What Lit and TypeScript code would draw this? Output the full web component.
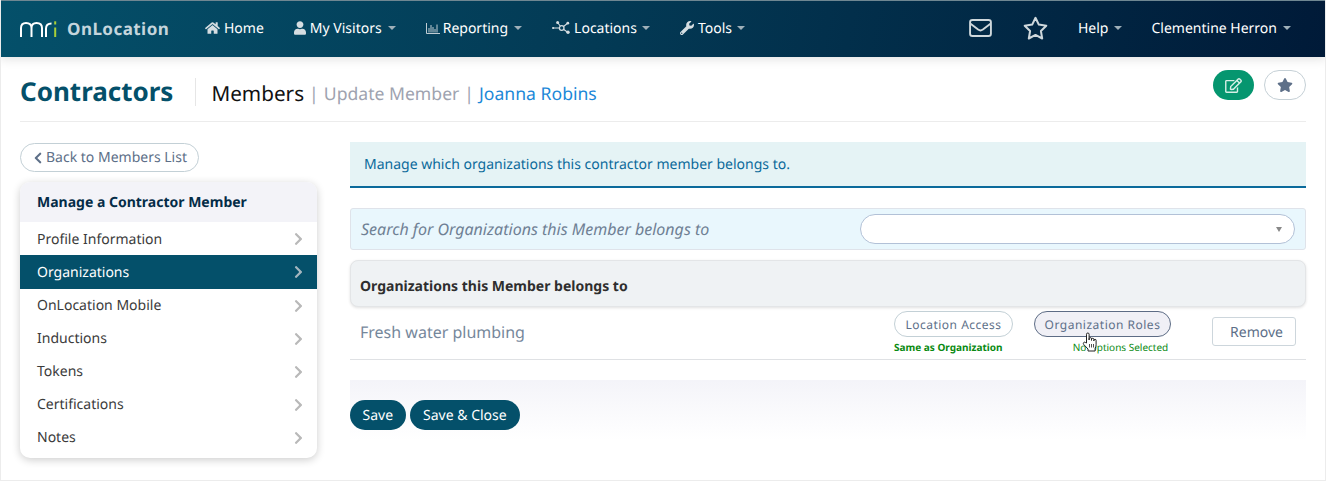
import { LitElement, html, css } from "lit";
import { customElement } from "lit/decorators.js";

const fa = (w: number, h: number, d: string, cls = "") =>
  html`<svg class="fa ${cls}" viewBox="0 0 ${w} ${h}" fill="currentColor"><path d=${d}></path></svg>`;

const CHEV = "M285.476 272.971L91.132 467.314c-9.373 9.373-24.569 9.373-33.941 0l-22.667-22.667c-9.357-9.357-9.375-24.522-.04-33.901L188.505 256 34.484 101.255c-9.335-9.379-9.317-24.544.04-33.901l22.667-22.667c9.373-9.373 24.569-9.373 33.941 0L285.475 239.03c9.373 9.372 9.373 24.568.001 33.941z";
const STAR = "M259.3 17.8L194 150.2 47.9 171.5c-26.2 3.8-36.7 36.1-17.7 54.6l105.7 103-25 145.5c-4.5 26.3 23.2 46 46.4 33.7L288 439.6l130.7 68.7c23.2 12.2 50.9-7.4 46.4-33.7l-25-145.5 105.7-103c19-18.5 8.5-50.8-17.7-54.6L382 150.2 316.7 17.8c-11.7-23.6-45.6-23.9-57.4 0z";
const HOME = "M280.37 148.26L96 300.11V464a16 16 0 0 0 16 16l112.06-.29a16 16 0 0 0 15.92-16V368a16 16 0 0 1 16-16h64a16 16 0 0 1 16 16v95.64a16 16 0 0 0 16 16.05L464 480a16 16 0 0 0 16-16V300L295.67 148.26a12.19 12.19 0 0 0-15.3 0zM571.6 251.47L488 182.56V44.05a12 12 0 0 0-12-12h-56a12 12 0 0 0-12 12v72.61L318.47 43a48 48 0 0 0-61 0L4.34 251.47a12 12 0 0 0-1.6 16.9l25.5 31A12 12 0 0 0 45.15 301l235.22-193.74a12.19 12.19 0 0 1 15.3 0L530.9 301a12 12 0 0 0 16.9-1.6l25.5-31a12 12 0 0 0-1.7-16.93z";
const USER = "M224 256c70.7 0 128-57.3 128-128S294.7 0 224 0 96 57.3 96 128s57.3 128 128 128zm89.6 32h-16.7c-22.2 10.2-46.9 16-72.9 16s-50.6-5.8-72.9-16h-16.7C60.2 288 0 348.2 0 422.4V464c0 26.5 21.5 48 48 48h352c26.5 0 48-21.5 48-48v-41.6c0-74.2-60.2-134.4-134.4-134.4z";
const WRENCH = "M507.73 109.1c-2.24-9.03-13.54-12.09-20.12-5.51l-74.36 74.36-67.88-11.31-11.31-67.88 74.36-74.36c6.62-6.62 3.43-17.9-5.66-20.16-47.38-11.74-99.55.91-136.58 37.93-39.64 39.64-50.55 97.1-34.05 147.2L18.74 402.76c-24.99 24.99-24.99 65.51 0 90.5 24.99 24.99 65.51 24.99 90.5 0l213.21-213.21c50.12 16.71 107.47 5.68 147.37-34.22 37.07-37.07 49.7-89.32 37.91-136.73zM64 472c-13.25 0-24-10.75-24-24 0-13.26 10.75-24 24-24s24 10.74 24 24c0 13.25-10.75 24-24 24z";
const EDIT = "M402.3 344.9l32-32c5-5 13.7-1.5 13.7 5.7V464c0 26.5-21.5 48-48 48H48c-26.5 0-48-21.5-48-48V112c0-26.5 21.5-48 48-48h273.5c7.1 0 10.7 8.6 5.7 13.7l-32 32c-1.5 1.5-3.5 2.3-5.7 2.3H48v352h352V350.5c0-2.1.8-4.1 2.3-5.6zm156.6-201.8L296.3 405.7l-90.4 10c-26.2 2.9-48.5-19.2-45.6-45.6l10-90.4L432.9 17.1c22.9-22.9 59.9-22.9 82.7 0l43.2 43.2c22.9 22.9 22.9 60 .1 82.8zM460.1 174L402 115.9 216.2 301.8l-7.3 65.3 65.3-7.3L460.1 174zm64.8-79.7l-43.2-43.2c-4.1-4.1-10.8-4.1-14.8 0L436 82l58.1 58.1 30.9-30.9c4-4.2 4-10.8-.1-14.9z";

const chartIcon = html`<svg class="ico chart" viewBox="0 0 14 11" fill="none" stroke="currentColor" stroke-width="0.9"><path d="M.5 0v10.5H14M3 5v4.5M5 2v7.5M7 4v5.5M9 6v3.5M11 1.5v8"></path></svg>`;
const nodesIcon = html`<svg class="ico nodes" viewBox="0 0 18 14" fill="currentColor"><path d="M5.6 1.5L9.7 7L15.6 2.2M9.7 7L16 11.5M1 7h8.7" stroke="currentColor" stroke-width="1.1" fill="none"></path><circle cx="1.1" cy="7" r="1.1"></circle><circle cx="5.6" cy="1.6" r="1.5"></circle><circle cx="15.8" cy="2.2" r="1.4"></circle><circle cx="16" cy="11.3" r="1.7"></circle><circle cx="9.7" cy="7" r="2.3" fill="#033d58" stroke="currentColor" stroke-width="1.3"></circle></svg>`;

const logo = html`<svg class="logo" viewBox="0 0 37 16" fill="none" stroke-width="2">
  <path stroke="#fff" d="M1 16V7C1 3.5 3.2 2 6 2S11.5 3.5 11.5 7V16M11.5 7C11.5 3.5 13.7 2 16.5 2S22 3.5 22 7V16"></path>
  <path stroke="#fff" d="M26 16V7.5C26 4 28 2.5 31.5 2.5"></path>
  <path stroke="#a9cf38" d="M35.2 6.5V16"></path>
  <path stroke="#a9cf38" d="M35.2 .3V3.5"></path>
</svg>`;

const hand = html`<svg class="hand" viewBox="0 0 16 20"><path fill="#fff" stroke="#222" stroke-width="1" stroke-linejoin="round" d="M4.5 11V2.3a1.3 1.3 0 0 1 2.6 0V8V6.8a1.2 1.2 0 0 1 2.4 0V8.4V7.5a1.2 1.2 0 0 1 2.4 0V9V8.4a1.1 1.1 0 0 1 2.2 0v4.4c0 1.5-.5 2.5-1 3.4V19H6v-2L1.8 12.6c-1.3-1.6.4-3.3 1.8-2z"></path><path stroke="#222" stroke-width=".8" d="M7.5 12v3.5M9.5 12v3.5M11.5 12v3.5"></path></svg>`;

const NAV = [
  { label: "Home", icon: fa(576, 512, HOME, "home") },
  { label: "My Visitors", icon: fa(448, 512, USER, "user"), caret: true },
  { label: "Reporting", icon: chartIcon, caret: true },
  { label: "Locations", icon: nodesIcon, caret: true },
  { label: "Tools", icon: fa(512, 512, WRENCH, "wrench"), caret: true },
];

const MENU = ["Profile Information", "Organizations", "OnLocation Mobile", "Inductions", "Tokens", "Certifications", "Notes"];

@customElement("app-root")
export class AppRoot extends LitElement {
  static styles = css`
    :host {
      display: block;
      width: 1326px;
      height: 481px;
      box-sizing: border-box;
      font-family: "Noto Sans", sans-serif;
      text-rendering: geometricPrecision;
      background: #fff;
      overflow: hidden;
      border-left: 1px solid #ececec;
      border-right: 1px solid #ececec;
      border-bottom: 1px solid #ececec;
    }
    * { box-sizing: border-box; }
    .fa, .ico { display: block; flex: none; }

    .top {
      height: 57px;
      margin: 0 -1px;
      border-top: 1px solid #6f8792;
      background: linear-gradient(100deg, #04506a 0%, #033a55 45%, #001a38 100%);
      box-shadow: 0 2px 10px rgba(0, 0, 0, 0.12);
      display: flex;
      align-items: center;
      padding: 0 35px 2px 20px;
      color: #fff;
      font-size: 14px;
    }
    .logo { width: 37px; height: 16px; flex: none; margin-top: 2px; }
    .brand { margin: 1px 0 0 10px; width: 138px; font-size: 17px; font-weight: 700; color: #c4d5dc; letter-spacing: 0.45px; }
    .nav { display: flex; gap: 30px; align-items: center; }
    .nav-item { display: flex; align-items: center; }
    .nav-item:nth-child(4) .caret, .nav-item:nth-child(5) .caret { margin-left: 5px; }
    .nav-item:nth-child(3) .icon-slot { margin-right: 3px; }
    .icon-slot { color: #d5dde1; margin-right: 4px; display: flex; }
    .home { width: 15px; height: 14px; }
    .user { width: 12px; height: 14px; }
    .chart { width: 14px; height: 11px; }
    .nodes { width: 18px; height: 14px; }
    .wrench { width: 14px; height: 14px; }
    .caret {
      width: 0; height: 0; margin-left: 6px;
      border-left: 4px solid transparent;
      border-right: 4px solid transparent;
      border-top: 4px solid #9fb0b9;
    }
    .spacer { flex: 1; }
    .top-icons { display: flex; align-items: center; gap: 31px; color: #cfd8dc; margin-right: 30px; }
    .env { width: 23px; height: 18px; }
    .star-o { width: 25px; height: 24px; }
    .right-nav { display: flex; gap: 29px; }

    .title-row {
      margin: 0 19px;
      height: 65px;
      padding-top: 6px;
      display: flex;
      align-items: center;
      border-bottom: 1px solid #ececec;
    }
    h1 { margin: -2px 0 0; font-size: 26px; font-weight: 700; color: #04506a; line-height: 34px; }
    .crumbs {
      margin-left: 22px;
      padding: 4px 0 0 15px;
      height: 28px;
      border-left: 1px solid #e6e6e6;
      display: flex;
      align-items: center;
      gap: 5px;
      font-size: 17.6px;
      color: #9ea3b0;
      white-space: nowrap;
    }
    .crumbs .main { font-size: 20.7px; color: #111; flex: none; }
    .crumbs .who { color: #1c88d8; }
    .actions { margin-left: auto; display: flex; gap: 10px; margin-top: -14px; }
    .round { width: 41px; height: 30px; border-radius: 15px; display: flex; align-items: center; justify-content: center; }
    .round.edit { background: #05966f; color: #d6efe6; }
    .round.edit .fa { width: 17px; height: 15px; }
    .round.fav { background: #fff; border: 1px solid #c5d0d6; color: #5d6f88; width: 42px; }
    .round.fav .fa { width: 16px; height: 14px; }

    .body { display: flex; padding: 20px 19px 0; gap: 33px; align-items: flex-start; }
    .side { width: 297px; flex: none; padding-top: 1px; }
    .back {
      width: 179px; height: 29px;
      border: 1px solid #c3d0d6;
      border-radius: 15px;
      display: flex;
      align-items: center;
      padding-left: 13px;
      gap: 4px;
      font-size: 14px;
      color: #5d6f88;
    }
    .back .fa { width: 8px; height: 14px; transform: scaleX(-1); }
    .menu {
      margin-top: 10px;
      border-radius: 10px;
      background: #fff;
      box-shadow: 0 2px 8px rgba(0, 0, 0, 0.2);
      overflow: hidden;
    }
    .menu-head {
      height: 40px;
      background: #f3f3f8;
      padding-left: 17px;
      display: flex;
      align-items: center;
      font-size: 14px;
      font-weight: 700;
      color: #042c47;
    }
    .menu-item {
      height: 33px;
      padding: 0 14px 0 17px;
      display: flex;
      align-items: center;
      justify-content: space-between;
      font-size: 14px;
      color: #3b3b3b;
    }
    .menu-item:nth-child(2) { padding-top: 1px; }
    .menu-item.active { background: #04506a; color: #fff; height: 34px; }
    .menu-item .fa { width: 9px; height: 14px; color: #b9b9b9; }
    .menu-item.active .fa { color: #a4b6bf; }
    .menu-item:last-child { height: 37px; padding-bottom: 4px; }

    .main { flex: 1; min-width: 0; }
    .alert {
      height: 46px;
      background: #e5f3f5;
      border-bottom: 2px solid #0b6a9b;
      padding: 0 14px;
      display: flex;
      align-items: center;
      font-size: 14px;
      color: #0b6a9b;
    }
    .search {
      margin-top: 20px;
      height: 42px;
      background: #e9f7fd;
      border: 1px solid #dfe3ea;
      border-radius: 3px;
      display: flex;
      align-items: center;
      justify-content: space-between;
      padding: 0 10px;
      font-size: 16px;
      font-style: italic;
      color: #6f8094;
    }
    .select {
      width: 435px; height: 30px;
      background: #fff;
      border: 1px solid #b2c1d7;
      border-radius: 15px;
      display: flex;
      align-items: center;
      justify-content: flex-end;
      padding-right: 12px;
    }
    .select i { width: 0; height: 0; border-left: 3px solid transparent; border-right: 3px solid transparent; border-top: 5px solid #888; margin-top: 1px; }
    .org-head {
      margin-top: 10px;
      height: 47px;
      background: #eff2f4;
      border: 1px solid #e3e5e7;
      border-radius: 8px;
      box-shadow: 0 1px 3px rgba(0, 0, 0, 0.12);
      padding: 6px 9px 0;
      display: flex;
      align-items: center;
      font-size: 14px;
      font-weight: 700;
      color: #2e2e2e;
    }
    .org-row {
      height: 53px;
      border-bottom: 1px solid #dfe1e4;
      display: flex;
      align-items: flex-start;
      padding-left: 10px;
    }
    .org-name { font-size: 16px; color: #76879b; margin-top: 14px; width: 534px; }
    .col { position: relative; display: flex; flex-direction: column; align-items: flex-start; margin-top: 4px; }
    .col.a { width: 119px; }
    .col.b { width: 137px; margin-left: 21px; align-items: center; }
    .pill {
      height: 26px;
      border-radius: 13px;
      border: 1px solid #c3d0d6;
      display: flex;
      align-items: center;
      justify-content: center;
      width: 100%;
      font-size: 12px;
      letter-spacing: 0.5px;
      color: #5d6f88;
    }
    .col.b .pill { background: #f0f0f6; border-color: #5d6c85; }
    .note { margin-top: 3px; font-size: 10px; line-height: 14px; color: #0a8a12; white-space: nowrap; }
    .note.bold { font-weight: 700; }
    .col.b .note { margin-left: 36px; }
    .hand { position: absolute; left: 48px; top: 21px; width: 16px; height: 20px; }
    .remove {
      margin-left: 41px; margin-top: 10px;
      width: 84px; height: 29px;
      border: 1px solid #cdd6dc;
      border-radius: 3px;
      display: flex;
      align-items: center;
      justify-content: flex-end;
      padding: 2px 12px 0 0;
      font-size: 14px;
      color: #5d6f88;
    }
    .foot {
      margin-top: 20px;
      height: 60px;
      padding-top: 20px;
      display: flex;
      gap: 4px;
      background: linear-gradient(#f4f4f9, #fff);
    }
    .btn {
      height: 30px;
      border-radius: 15px;
      background: #04506a;
      color: #fff;
      display: flex;
      align-items: center;
      padding: 0 13.5px;
      font-size: 14px;
    }
    .btn:first-child { padding: 0 12.5px; }
  `;

  render() {
    return html`
      <header class="top">
        ${logo}
        <div class="brand">OnLocation</div>
        <nav class="nav">
          ${NAV.map((n) => html`<div class="nav-item"><span class="icon-slot">${n.icon}</span>${n.label}${n.caret ? html`<span class="caret"></span>` : ""}</div>`)}
        </nav>
        <div class="spacer"></div>
        <div class="top-icons">
          <svg class="env" viewBox="0 0 24 19" fill="none" stroke="currentColor" stroke-width="2"><rect x="1" y="1" width="22" height="17" rx="2.5"></rect><path d="M1.5 5l8 6.2c1.5 1.1 3.5 1.1 5 0l8-6.2"></path></svg>
          <svg class="star-o" viewBox="0 0 25 24" fill="none" stroke="currentColor" stroke-width="2" stroke-linejoin="round"><path d="M12.5 1.8l3.3 6.8 7.5 1.1-5.4 5.3 1.3 7.5-6.7-3.6-6.7 3.6 1.3-7.5-5.4-5.3 7.5-1.1z"></path></svg>
        </div>
        <div class="right-nav">
          <div class="nav-item">Help<span class="caret"></span></div>
          <div class="nav-item">Clementine Herron<span class="caret"></span></div>
        </div>
      </header>

      <section class="title-row">
        <h1>Contractors</h1>
        <div class="crumbs">
          <span class="main">Members</span><span>|</span><span>Update Member</span><span>|</span><span class="who">Joanna Robins</span>
        </div>
        <div class="actions">
          <div class="round edit">${fa(576, 512, EDIT)}</div>
          <div class="round fav">${fa(576, 512, STAR)}</div>
        </div>
      </section>

      <div class="body">
        <aside class="side">
          <div class="back">${fa(320, 512, CHEV)}Back to Members List</div>
          <div class="menu">
            <div class="menu-head">Manage a Contractor Member</div>
            ${MENU.map((m, i) => html`<div class="menu-item ${i === 1 ? "active" : ""}">${m}${fa(320, 512, CHEV)}</div>`)}
          </div>
        </aside>
        <main class="main">
          <div class="alert">Manage which organizations this contractor member belongs to.</div>
          <div class="search">Search for Organizations this Member belongs to<div class="select"><i></i></div></div>
          <div class="org-head">Organizations this Member belongs to</div>
          <div class="org-row">
            <div class="org-name">Fresh water plumbing</div>
            <div class="col a"><div class="pill">Location Access</div><div class="note bold">Same as Organization</div></div>
            <div class="col b"><div class="pill">Organization Roles</div><div class="note">No Options Selected</div>${hand}</div>
            <div class="remove">Remove</div>
          </div>
          <div class="foot"><div class="btn">Save</div><div class="btn">Save &amp; Close</div></div>
        </main>
      </div>
    `;
  }
}
